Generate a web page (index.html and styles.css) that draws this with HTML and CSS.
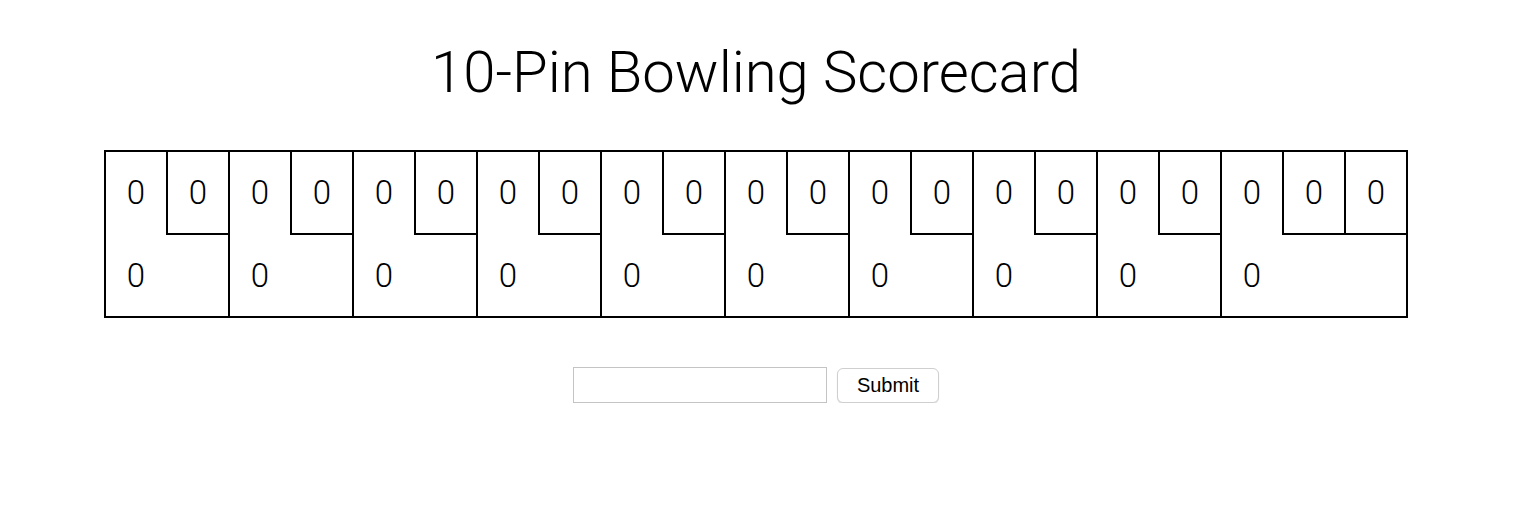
FILE: index.html
```html
<!DOCTYPE html>
<html>
<head>
<meta charset="utf-8">
<link rel="stylesheet" href="styles.css">
</head>
<body>
<div class="page">
  <h1 class="title">10-Pin Bowling Scorecard</h1>
  <div class="card">
    <div class="frame"><div class="roll">0</div><div class="roll box">0</div><div class="score">0</div></div>
    <div class="frame"><div class="roll">0</div><div class="roll box">0</div><div class="score">0</div></div>
    <div class="frame"><div class="roll">0</div><div class="roll box">0</div><div class="score">0</div></div>
    <div class="frame"><div class="roll">0</div><div class="roll box">0</div><div class="score">0</div></div>
    <div class="frame"><div class="roll">0</div><div class="roll box">0</div><div class="score">0</div></div>
    <div class="frame"><div class="roll">0</div><div class="roll box">0</div><div class="score">0</div></div>
    <div class="frame"><div class="roll">0</div><div class="roll box">0</div><div class="score">0</div></div>
    <div class="frame"><div class="roll">0</div><div class="roll box">0</div><div class="score">0</div></div>
    <div class="frame"><div class="roll">0</div><div class="roll box">0</div><div class="score">0</div></div>
    <div class="frame last"><div class="roll">0</div><div class="roll box">0</div><div class="roll box">0</div><div class="score">0</div></div>
  </div>
  <form class="entry">
    <input class="entry-input" type="text">
    <button class="entry-button" type="button">Submit</button>
  </form>
</div>
</body>
</html>
```
FILE: styles.css
```css
html, body {
  margin: 0;
  padding: 0;
  background: #fff;
}
.page {
  display: flex;
  flex-direction: column;
  align-items: center;
  padding-right: 4px;
  font-family: Roboto, "Liberation Sans", sans-serif;
  color: #000;
}
.title {
  margin: 36px 0 0 0;
  font-size: 58px;
  font-weight: 300;
  line-height: 72px;
}
.card {
  margin-top: 42px;
  display: flex;
  border: 2px solid #000;
}
.frame {
  display: grid;
  grid-template-columns: 60px 62px;
  grid-template-rows: 83px 81px;
  border-right: 2px solid #000;
  width: 122px;
}
.frame.last {
  grid-template-columns: 60px 62px 62px;
  width: 184px;
  border-right: 0;
}
.roll, .score {
  display: flex;
  align-items: center;
  justify-content: center;
  font-size: 33px;
  font-weight: 300;
}
.roll {
  padding-bottom: 3px;
}
.roll.box {
  border-left: 2px solid #000;
  border-bottom: 2px solid #000;
  padding-bottom: 1px;
}
.frame .score {
  grid-column: 1 / -1;
  width: 60px;
}
.entry {
  margin-top: 49px;
  display: flex;
  align-items: center;
  gap: 10px;
}
.entry-input {
  width: 254px;
  height: 36px;
  box-sizing: border-box;
  border: 1px solid #c4c4c4;
  margin: 0;
  padding: 0 4px;
}
.entry-button {
  height: 35px;
  width: 102px;
  box-sizing: border-box;
  border: 1px solid #cfcfcf;
  border-radius: 6px;
  background: #fff;
  box-shadow: 0 1px 1px rgba(0,0,0,0.12);
  font-family: "Liberation Sans", Arial, sans-serif;
  font-size: 20px;
  color: #000;
  padding: 0;
}
```
